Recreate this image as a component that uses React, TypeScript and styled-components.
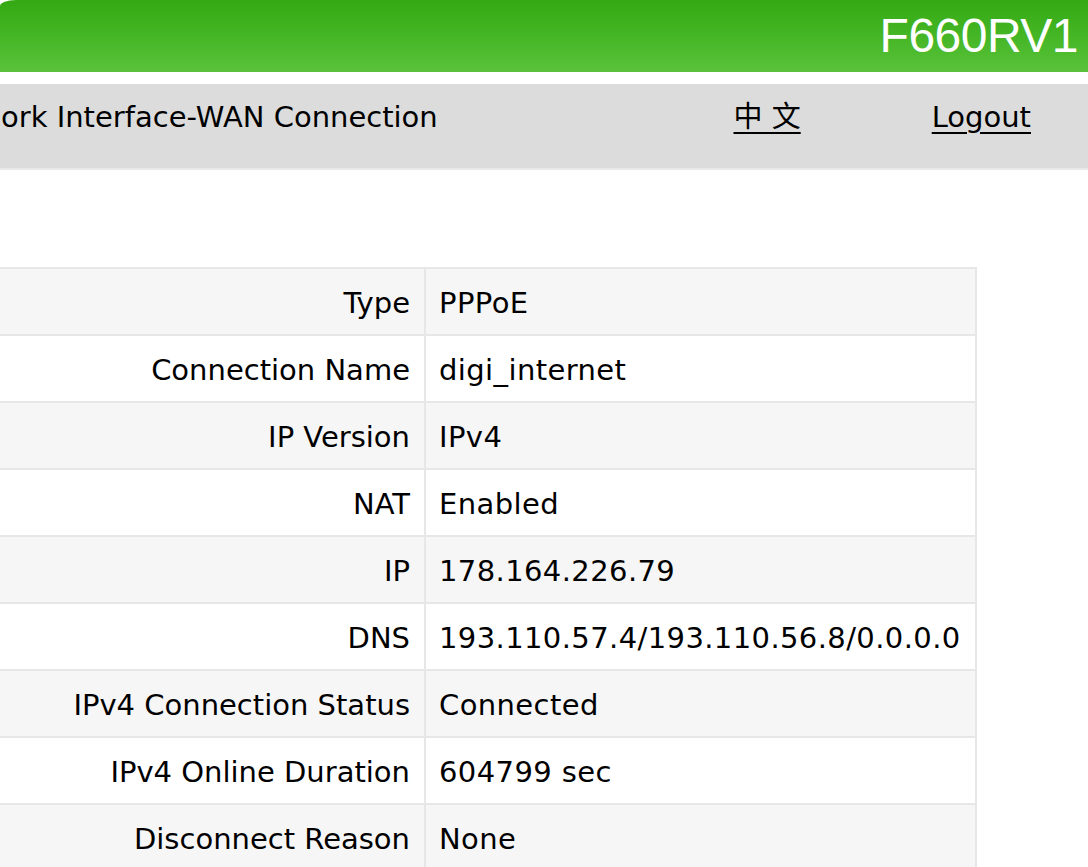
import styled, { createGlobalStyle } from 'styled-components';

const GlobalStyle = createGlobalStyle`
  html, body {
    margin: 0;
    padding: 0;
    background: #ffffff;
    overflow: hidden;
  }
  body {
    font-family: "DejaVu Sans", Verdana, sans-serif;
    color: #000000;
  }
`;

const Page = styled.div`
  width: 1088px;
  min-height: 867px;
  display: flex;
  flex-direction: column;
`;

const Banner = styled.header`
  height: 72px;
  display: flex;
  align-items: center;
  justify-content: flex-end;
  padding-right: 10px;
  background: linear-gradient(to bottom, #33a912 0%, #45b626 50%, #5ac23b 100%);
  border-top-left-radius: 16px 6px;
`;

const Model = styled.span`
  font-family: "Liberation Sans", Arial, sans-serif;
  font-size: 48px;
  color: #ffffff;
  line-height: 1;
  letter-spacing: -0.5px;
`;

const NavBar = styled.nav`
  margin-top: 12px;
  height: 86px;
  display: flex;
  align-items: flex-start;
  padding-top: 13px;
  box-sizing: border-box;
  background: #dcdcdc;
  border-bottom: 2px solid #e9e9e9;
  font-size: 29px;
  line-height: 40px;
`;

const PageTitle = styled.span`
  flex: 1;
  padding-left: 1px;
  white-space: nowrap;
`;

const NavLink = styled.a<{ $gap: number }>`
  margin-right: ${({ $gap }) => $gap}px;
  color: #000000;
  text-decoration: underline;
  text-underline-offset: 5px;
  white-space: nowrap;
  font-family: "DejaVu Sans", "Noto Sans CJK SC", sans-serif;
`;

const Content = styled.main`
  padding-top: 97px;
`;

const InfoTable = styled.table`
  width: 977px;
  border-collapse: collapse;
  font-size: 29px;
`;

const Row = styled.tr<{ $shade: boolean }>`
  background: ${({ $shade }) => ($shade ? '#f6f6f6' : '#ffffff')};
`;

const Label = styled.td`
  width: 410px;
  height: 63px;
  padding: 2px 14px 0 0;
  text-align: right;
  white-space: nowrap;
  border: 2px solid #e7e7e7;
  border-left: none;
`;

const Value = styled.td`
  height: 63px;
  padding: 2px 0 0 13px;
  white-space: nowrap;
  letter-spacing: 0.4px;
  border: 2px solid #e7e7e7;
`;

const rows: [string, string][] = [
  ['Type', 'PPPoE'],
  ['Connection Name', 'digi_internet'],
  ['IP Version', 'IPv4'],
  ['NAT', 'Enabled'],
  ['IP', '178.164.226.79'],
  ['DNS', '193.110.57.4/193.110.56.8/0.0.0.0'],
  ['IPv4 Connection Status', 'Connected'],
  ['IPv4 Online Duration', '604799 sec'],
  ['Disconnect Reason', 'None'],
];

export default function App() {
  return (
    <>
      <GlobalStyle />
      <Page>
        <Banner>
          <Model>F660RV1</Model>
        </Banner>
        <NavBar>
          <PageTitle>ork Interface-WAN Connection</PageTitle>
          <NavLink href="#" $gap={131}>中 文</NavLink>
          <NavLink href="#" $gap={57}>Logout</NavLink>
        </NavBar>
        <Content>
          <InfoTable>
            <tbody>
              {rows.map(([label, value], i) => (
                <Row key={label} $shade={i % 2 === 0}>
                  <Label>{label}</Label>
                  <Value>{value}</Value>
                </Row>
              ))}
            </tbody>
          </InfoTable>
        </Content>
      </Page>
    </>
  );
}
